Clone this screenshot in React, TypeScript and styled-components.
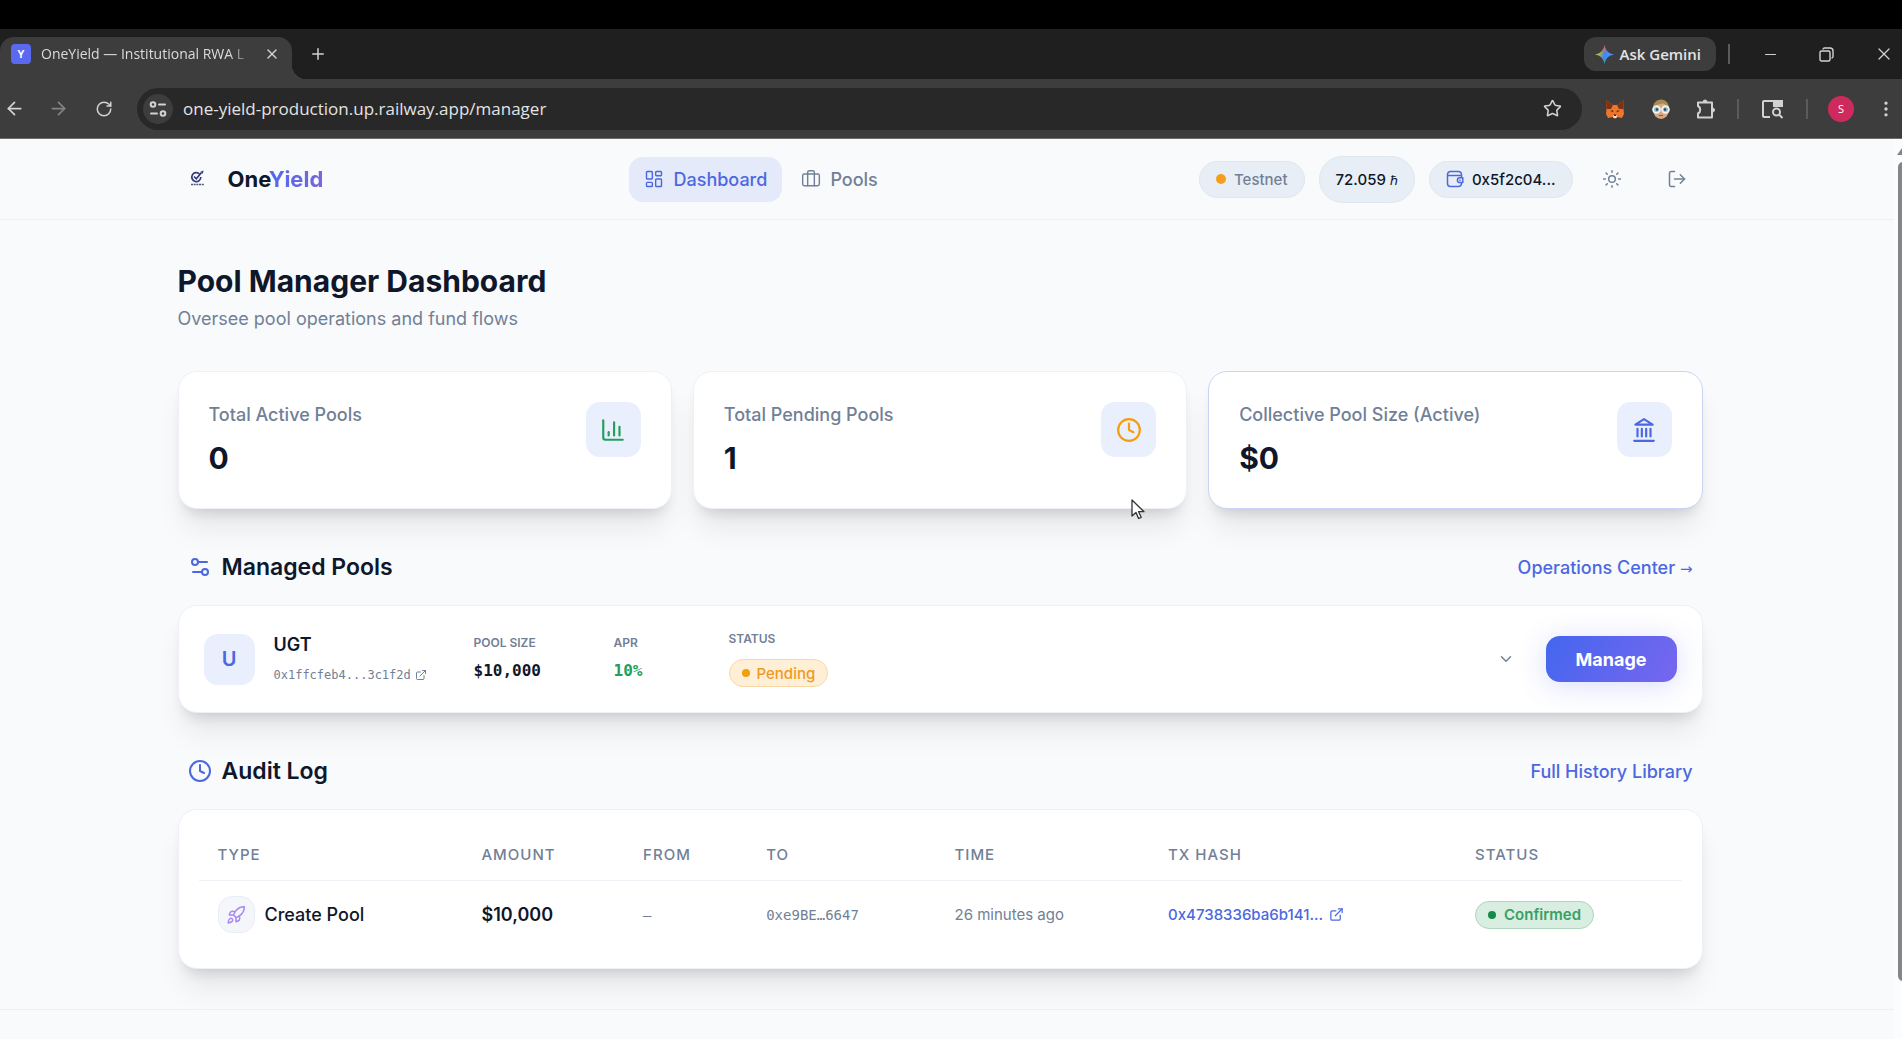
import React from "react";
import styled, { createGlobalStyle, css } from "styled-components";
import {
  ArrowLeft,
  ArrowRight,
  Briefcase,
  ChartColumn,
  ChevronDown,
  Clock,
  EllipsisVertical,
  ExternalLink,
  LayoutDashboard,
  LogOut,
  Minus,
  Plus,
  Rocket,
  RotateCw,
  Settings2,
  Star,
  Sun,
  X,
} from "lucide-react";

const sans = `Inter, "Liberation Sans", sans-serif`;
const chrome = `"Open Sans", "Noto Sans", sans-serif`;
const mono = `"DejaVu Sans Mono", "Liberation Mono", monospace`;

const ink = "#0f172a";
const muted = "#718096";
const blue = "#4c68e0";
const green = "#22a05b";
const amber = "#f59e0b";

const GlobalStyle = createGlobalStyle`
  *, *::before, *::after { box-sizing: border-box; }
  html, body { margin: 0; height: 100%; overflow: hidden; }
  #root { height: 100%; }
  body { background: #f8fafc; color: ${ink}; font-family: ${sans}; }
  button, input { font: inherit; color: inherit; }
  button { border: 0; padding: 0; background: none; cursor: pointer; }
  a { color: inherit; text-decoration: none; }
  h1, h2, h3, p, dl, dd, dt { margin: 0; }
  svg { display: block; flex: none; }
`;

/* ---------- browser frame ---------- */

const Window = styled.div`
  display: flex;
  flex-direction: column;
  height: 100vh;
  border-top: 29px solid #000;
`;

const TabStrip = styled.div`
  display: flex;
  align-items: flex-end;
  height: 50px;
  flex: none;
  background: #1f1f1f;
  color: #dcdcdc;
  font-family: ${chrome};
`;

const Tab = styled.div`
  position: relative;
  display: flex;
  align-items: center;
  gap: 10px;
  width: 292px;
  height: 42px;
  padding: 0 12px 8px 11px;
  border-radius: 14px 14px 0 0;
  background: #3c3d3c;
  &::after {
    content: "";
    position: absolute;
    left: 100%;
    bottom: 0;
    width: 14px;
    height: 14px;
    background: radial-gradient(circle at 100% 0, transparent 14px, #3c3d3c 14px);
  }
`;

const Favicon = styled.span`
  display: grid;
  place-items: center;
  width: 20px;
  height: 20px;
  flex: none;
  border-radius: 4px;
  background: #5b68f0;
  color: #fff;
  font: 700 10px ${sans};
`;

const TabTitle = styled.span`
  flex: 1;
  overflow: hidden;
  white-space: nowrap;
  font-size: 14px;
  line-height: 20px;
  mask-image: linear-gradient(90deg, #000 88%, transparent);
`;

const ChromeButton = styled.button<{ $w?: number; $dim?: boolean }>`
  display: grid;
  place-items: center;
  width: ${(p) => p.$w ?? 32}px;
  height: 34px;
  flex: none;
  color: ${(p) => (p.$dim ? "#838383" : "#d2d2d2")};
`;

const TabClose = styled(ChromeButton)`
  height: 20px;
`;

const NewTab = styled(ChromeButton)`
  margin-left: 10px;
  margin-bottom: 8px;
`;

const WindowControls = styled.div`
  display: flex;
  align-items: center;
  height: 34px;
  margin-left: auto;
  margin-bottom: 8px;
`;

const WindowClose = styled(ChromeButton)`
  margin-left: 12px;
`;

const Gemini = styled.button`
  display: flex;
  align-items: center;
  gap: 6px;
  height: 34px;
  padding: 0 15px 0 11px;
  border-radius: 12px;
  background: #3c3d3c;
  color: #e4e4e4;
  font-size: 15px;
  font-weight: 600;
`;

const Divider = styled.span<{ $gap: number }>`
  width: 2px;
  height: 20px;
  margin: 0 ${(p) => p.$gap}px;
  background: #5a5b5a;
`;

const Toolbar = styled.div`
  display: flex;
  align-items: center;
  height: 60px;
  flex: none;
  background: #3c3d3c;
  border-bottom: 1px solid #6e6e6e;
  color: #d2d2d2;
  font-family: ${chrome};
`;

const NavButtons = styled.div`
  display: flex;
  gap: 14px;
  width: 137px;
`;

const AddressBar = styled.div`
  display: flex;
  align-items: center;
  flex: 1;
  height: 42px;
  padding: 0 12px 0 6px;
  border-radius: 21px;
  background: #282828;
`;

const SiteInfo = styled.button`
  display: grid;
  place-items: center;
  width: 30px;
  height: 30px;
  border-radius: 50%;
  background: #3c3d3c;
`;

const Url = styled.input`
  flex: 1;
  min-width: 0;
  padding: 0 0 0 10px;
  border: 0;
  outline: 0;
  background: none;
  color: #e3e3e3;
  font-size: 17px;
  line-height: 24px;
`;

const Extensions = styled.div`
  display: flex;
  align-items: center;
  padding: 0 3px 0 10px;
`;

const Avatar = styled.button`
  display: grid;
  place-items: center;
  width: 26px;
  height: 26px;
  margin: 0 19px 0 10px;
  border-radius: 50%;
  background: #cf2a5d;
  color: #fff;
  font-size: 11px;
`;

/* ---------- page ---------- */

const Viewport = styled.div`
  display: flex;
  flex: 1;
  min-height: 0;
  background: #fbfcfd;
`;

const Page = styled.div`
  flex: 1;
  min-width: 0;
  overflow: hidden;
  background: #f8fafc;
`;

const Scrollbar = styled.div`
  display: flex;
  flex-direction: column;
  align-items: flex-end;
  width: 8px;
  padding: 9px 0 58px;
  overflow: hidden;
  gap: 7px;
`;

const ScrollArrow = styled.span`
  border: 5px solid transparent;
  border-top: 0;
  border-bottom: 7px solid #858585;
  margin-right: -5px;
`;

const Thumb = styled.span`
  flex: 1;
  width: 10px;
  margin-right: -6px;
  border-radius: 5px;
  background: #858585;
`;

const container = css`
  width: 100%;
  max-width: 1561px;
  margin: 0 auto;
  padding: 0 25px 0 11px;
`;

const Header = styled.header`
  border-bottom: 1px solid #eceff3;
`;

const HeaderInner = styled.div`
  ${container}
  display: flex;
  align-items: center;
  justify-content: space-between;
  height: 80px;
`;

const Brand = styled.a`
  display: flex;
  align-items: center;
  gap: 17px;
  font-size: 22px;
  font-weight: 700;
  line-height: 28px;
`;

const BrandAccent = styled.span`
  background: linear-gradient(90deg, #4f6af0, #7a66d8);
  background-clip: text;
  color: transparent;
`;

const Nav = styled.nav`
  display: flex;
  gap: 4px;
`;

const NavLink = styled.a<{ $active?: boolean }>`
  display: flex;
  align-items: center;
  gap: 9px;
  height: 45px;
  padding: 0 15px;
  border-radius: 14px;
  background: ${(p) => (p.$active ? "#e5eafa" : "transparent")};
  color: ${(p) => (p.$active ? blue : muted)};
  font-size: 18px;
  font-weight: 500;
`;

const HeaderRight = styled.div`
  display: flex;
  align-items: center;
  gap: 14px;
`;

const Pill = styled.span<{ $tall?: boolean; $muted?: boolean }>`
  display: flex;
  align-items: center;
  gap: 8px;
  height: ${(p) => (p.$tall ? 47 : 37)}px;
  padding: 0 16px;
  border: 1px solid #e0e7ef;
  border-radius: 24px;
  background: #e8eef5;
  color: ${(p) => (p.$muted ? muted : ink)};
  font-size: 15px;
  font-weight: 500;
  svg { color: ${blue}; }
`;

const Hbar = styled.span`
  font-size: 13px;
`;

const Dot = styled.i<{ $color: string; $size?: number }>`
  width: ${(p) => p.$size ?? 8}px;
  height: ${(p) => p.$size ?? 8}px;
  flex: none;
  border-radius: 50%;
  background: ${(p) => p.$color};
`;

const IconButton = styled.button`
  display: grid;
  place-items: center;
  width: 51px;
  height: 45px;
  color: ${muted};
`;

const Main = styled.main`
  ${container}
  padding-top: 42px;
  padding-bottom: 40px;
`;

const Title = styled.h1`
  font-size: 30px;
  font-weight: 700;
  line-height: 38px;
`;

const Subtitle = styled.p`
  margin-top: 5px;
  color: ${muted};
  font-size: 18px;
  line-height: 28px;
`;

const cardSurface = css`
  border: 1px solid #edf1f7;
  border-radius: 19px;
  background: #fff;
  box-shadow: 0 24px 30px -6px rgba(0, 0, 0, 0.08), 0 10px 14px -7px rgba(0, 0, 0, 0.14);
`;

const StatGrid = styled.section`
  display: grid;
  grid-template-columns: repeat(3, 1fr);
  gap: 21px;
  margin-top: 38px;
`;

const StatCard = styled.article<{ $outlined?: boolean }>`
  ${cardSurface}
  display: flex;
  justify-content: space-between;
  height: 138px;
  padding: 30px;
  ${(p) => p.$outlined && "border-color: #ccd3f4;"}
`;

const StatLabel = styled.h3`
  color: ${muted};
  font-size: 18px;
  font-weight: 500;
  line-height: 26px;
`;

const StatValue = styled.p`
  margin-top: 10px;
  font-size: 30px;
  font-weight: 700;
  line-height: 40px;
`;

const Tile = styled.span<{ $size: number; $color: string }>`
  display: grid;
  place-items: center;
  width: ${(p) => p.$size}px;
  height: ${(p) => p.$size}px;
  flex: none;
  border-radius: 14px;
  background: #e9effc;
  color: ${(p) => p.$color};
  font-size: 20px;
  font-weight: 600;
`;

const SectionHead = styled.div`
  display: flex;
  align-items: center;
  justify-content: space-between;
  height: 38px;
  margin: 39px 0 19px;
  padding: 0 10px;
`;

const SectionTitle = styled.h2`
  display: flex;
  align-items: center;
  gap: 10px;
  font-size: 23px;
  font-weight: 600;
  line-height: 30px;
  svg { color: ${blue}; }
`;

const SectionLink = styled.a`
  color: ${blue};
  font-size: 18px;
  font-weight: 500;
`;

const Arrow = styled.span`
  font: 15px "DejaVu Sans", sans-serif;
`;

const PoolCard = styled.article`
  ${cardSurface}
  display: grid;
  grid-template-columns: 51px 181px 121px 96px 1fr auto auto;
  column-gap: 19px;
  align-items: center;
  height: 108px;
  padding: 0 25px;
`;

const PoolName = styled.h3`
  font-size: 18px;
  font-weight: 600;
  line-height: 24px;
`;

const Address = styled.a`
  display: flex;
  align-items: center;
  gap: 4px;
  margin-top: 8px;
  color: ${muted};
  font: 12px/20px ${mono};
`;

const Metric = styled.dl``;

const MetricLabel = styled.dt`
  color: ${muted};
  font-size: 12px;
  font-weight: 600;
  line-height: 16px;
`;

const MetricValue = styled.dd<{ $color?: string }>`
  margin-top: 8px;
  color: ${(p) => p.$color ?? ink};
  font: 700 16px/24px ${mono};
`;

const PendingBadge = styled.dd`
  display: flex;
  align-items: center;
  gap: 7px;
  width: fit-content;
  height: 28px;
  margin-top: 12px;
  padding: 0 12px;
  border: 1px solid #f8d9a4;
  border-radius: 14px;
  background: #feefd6;
  color: #f0991e;
  font-size: 15px;
  font-weight: 500;
`;

const ConfirmedBadge = styled.span`
  display: inline-flex;
  align-items: center;
  gap: 8px;
  height: 28px;
  padding: 0 12px;
  border: 1px solid #aed5bf;
  border-radius: 14px;
  background: #d8eee1;
  color: #37a066;
  font-size: 15px;
  font-weight: 600;
`;

const Expand = styled.button`
  display: grid;
  place-items: center;
  width: 42px;
  height: 42px;
  color: ${muted};
`;

const ManageButton = styled.button`
  width: 131px;
  height: 46px;
  border-radius: 14px;
  background: linear-gradient(120deg, #4466ee, #7866f0);
  box-shadow: 0 4px 28px rgba(88, 104, 240, 0.22);
  color: #fff;
  font-size: 18px;
  font-weight: 700;
`;

const TableCard = styled.div`
  ${cardSurface}
  height: 160px;
  padding: 20px;
`;

const Table = styled.table`
  width: 100%;
  border-collapse: collapse;
  table-layout: fixed;
  text-align: left;
`;

const Th = styled.th<{ $share: number }>`
  width: ${(p) => p.$share}%;
  height: 50px;
  padding: 0 0 0 19px;
  border-bottom: 1px solid #eff2f6;
  color: ${muted};
  font-size: 15px;
  font-weight: 500;
  letter-spacing: 1px;
`;

const Td = styled.td<{ $kind?: "amount" | "mono" | "link" }>`
  height: 69px;
  padding: 0 0 0 19px;
  color: ${muted};
  font-size: 15px;
  white-space: nowrap;
  ${(p) => p.$kind === "amount" && `color: ${ink}; font-size: 18px; font-weight: 600;`}
  ${(p) => p.$kind === "mono" && `font-family: ${mono}; font-size: 14px;`}
  ${(p) => p.$kind === "link" && `color: ${blue}; font-weight: 500;`}
`;

const TypeCell = styled.span`
  display: flex;
  align-items: center;
  gap: 10px;
  color: ${ink};
  font-size: 18px;
  font-weight: 500;
`;

const TypeIcon = styled.span`
  display: grid;
  place-items: center;
  width: 37px;
  height: 37px;
  border: 1px solid #e9eef5;
  border-radius: 14px;
  background: #f4f6fc;
  color: #a78bee;
`;

const HashLink = styled.a`
  display: flex;
  align-items: center;
  gap: 6px;
`;

const Footer = styled.footer`
  height: 60px;
  border-top: 1px solid #eceff3;
`;

const Pointer = styled.svg`
  position: fixed;
  left: 1131px;
  top: 499px;
`;

/* ---------- drawings ---------- */

const TuneIcon = () => (
  <svg width="18" height="18" viewBox="0 0 18 18" fill="none" stroke="currentColor" strokeWidth="2" strokeLinecap="round">
    <circle cx="4" cy="4.5" r="2.3" />
    <path d="M10 4.5h6M2 13.5h6" />
    <circle cx="14" cy="13.5" r="2.3" />
  </svg>
);

const GeminiIcon = () => (
  <svg width="19" height="19" viewBox="0 0 20 20">
    <defs>
      <linearGradient id="gemA" x1="0" y1="0.3" x2="1" y2="0.6">
        <stop offset="0" stopColor="#f6c143" />
        <stop offset="0.35" stopColor="#8aa86b" />
        <stop offset="0.5" stopColor="#4285f4" />
        <stop offset="1" stopColor="#4aa0ff" />
      </linearGradient>
      <linearGradient id="gemB" x1="0" y1="0" x2="0" y2="1">
        <stop offset="0" stopColor="#f0534a" />
        <stop offset="0.45" stopColor="#f0534a" stopOpacity="0" />
        <stop offset="0.7" stopColor="#34b36a" stopOpacity="0" />
        <stop offset="1" stopColor="#34b36a" />
      </linearGradient>
    </defs>
    <path d="M10 0c.8 5.500 4.500 9.200 10 10-5.500.8-9.200 4.500-10 10-.8-5.500-4.500-9.200-10-10 5.500-.8 9.200-4.500 10-10z" fill="url(#gemA)" />
    <path d="M10 0c.8 5.500 4.500 9.200 10 10-5.500.8-9.200 4.500-10 10-.8-5.500-4.500-9.200-10-10 5.500-.8 9.200-4.500 10-10z" fill="url(#gemB)" />
  </svg>
);

const RestoreIcon = () => (
  <svg width="15" height="15" viewBox="0 0 15 15" fill="none" stroke="currentColor" strokeWidth="1.4">
    <rect x="1" y="4" width="10" height="10" rx="1.500" />
    <path d="M4 2.500A1.500 1.500 0 0 1 5.500 1H11a3 3 0 0 1 3 3v5.500a1.500 1.500 0 0 1-1.500 1.500" />
  </svg>
);

const FoxIcon = () => (
  <svg width="20" height="20" viewBox="0 0 20 20">
    <path d="M1 1l7 5h4l7-5-.5 9 .5 5-2 4-5-1-1 1.500H9L8 18l-5 1-2-4 .5-5z" fill="#f0762a" />
    <path d="M1 1l7 5-2 4-4.500 0zM19 1l-7 5 2 4 4.500 0z" fill="#7d3213" />
    <path d="M5 11.500l3 0 .4 2zM15 11.500l-3 0-.4 2z" fill="#3a2a2a" />
    <path d="M8 16h4l-.5 3h-3z" fill="#f3e4d6" />
    <path d="M8.500 15.500h3l-.5 1.500h-2z" fill="#2b2b2b" />
  </svg>
);

const PersonIcon = () => (
  <svg width="20" height="20" viewBox="0 0 20 20">
    <ellipse cx="10" cy="11" rx="8" ry="9" fill="#dda77f" />
    <path d="M2 9c0-5 3.500-8.500 8-8.500S18 4 18 9c-2-1-3-4-6-4.500C8 5 5 6 2 9z" fill="#a98a52" />
    <g fill="#8fc0cf" stroke="#eef4f5" strokeWidth="1.800">
      <circle cx="5.500" cy="10.500" r="3.400" />
      <circle cx="14.500" cy="10.500" r="3.400" />
    </g>
    <circle cx="6" cy="10.500" r="1.200" fill="#27424c" />
    <circle cx="14" cy="10.500" r="1.200" fill="#27424c" />
    <path d="M8 16.500h4" stroke="#9c5b45" strokeWidth="1.200" />
  </svg>
);

const PuzzleIcon = () => (
  <svg width="22" height="22" viewBox="0 0 22 22" fill="none" stroke="currentColor" strokeWidth="2" strokeLinejoin="round">
    <path d="M3 4.500h14v15H3v-4c3-1.500 3-6 0-7.500z" />
    <path d="M8 4a2 2 0 0 1 4 0zM17.500 10a2 2 0 0 1 0 4z" fill="currentColor" strokeWidth="1" />
  </svg>
);

const PanelSearchIcon = () => (
  <svg width="23" height="20" viewBox="0 0 23 20" fill="none" stroke="currentColor" strokeWidth="2">
    <path d="M9 18H3a1 1 0 0 1-1-1V3a1 1 0 0 1 1-1h17a1 1 0 0 1 1 1v5" />
    <path d="M13 2h8v5h-8z" fill="currentColor" />
    <circle cx="15.500" cy="13" r="3.500" />
    <path d="M18 15.500l3.500 3.500" />
  </svg>
);

const BrandMark = () => (
  <svg width="33" height="33" viewBox="0 0 33 33" fill="none">
    <path d="M21.500 11a4.500 4.500 0 1 0 1.300 3" stroke="#34387c" strokeWidth="1.700" />
    <path d="M16 13.500l2.300 2.300 5.200-6.300" stroke="#34387c" strokeWidth="1.700" />
    <path d="M22.500 8.800l3-1.300-.6 3.200" fill="#34387c" />
    <path d="M13 21.500h13" stroke="#50557c" strokeWidth="1.600" strokeDasharray="2 .7" />
  </svg>
);

const WalletIcon = () => (
  <svg width="18" height="18" viewBox="0 0 18 18" fill="none" stroke="currentColor" strokeWidth="1.500" strokeLinejoin="round">
    <path d="M15.500 7V4.500a3 3 0 0 0-3-3h-8a3 3 0 0 0-3 3v9a3 3 0 0 0 3 3h8a3 3 0 0 0 3-3v-.5" />
    <path d="M1.500 5.500h14" />
    <path d="M16.800 7.800h-3a2.400 2.400 0 0 0 0 4.800h3z" />
    <circle cx="14" cy="10.200" r=".4" fill="currentColor" strokeWidth="1" />
  </svg>
);

const BankIcon = ({ size = 24 }: { size?: number }) => (
  <svg width={size} height={size} viewBox="0 0 24 24" fill="none" stroke="currentColor" strokeWidth="2" strokeLinecap="round" strokeLinejoin="round">
    <path d="M3 22h18M6 18v-7M10 18v-7M14 18v-7M18 18v-7M12 2l8 5H4z" />
  </svg>
);

/* ---------- content ---------- */

const stats = [
  { label: "Total Active Pools", value: "0", color: green, Icon: ChartColumn },
  { label: "Total Pending Pools", value: "1", color: amber, Icon: Clock },
  { label: "Collective Pool Size (Active)", value: "$0", color: blue, Icon: BankIcon, outlined: true },
];

const columns = [
  { name: "Type", share: 17.8 },
  { name: "Amount", share: 10.9 },
  { name: "From", share: 8.3 },
  { name: "To", share: 12.7 },
  { name: "Time", share: 14.4 },
  { name: "Tx Hash", share: 20.7 },
  { name: "Status", share: 15.2 },
];

function BrowserFrame() {
  return (
    <>
      <TabStrip>
        <Tab>
          <Favicon>Y</Favicon>
          <TabTitle>OneYield — Institutional RWA L</TabTitle>
          <TabClose $w={16} aria-label="Close tab"><X size={16} /></TabClose>
        </Tab>
        <NewTab aria-label="New tab"><Plus size={18} /></NewTab>
        <WindowControls>
          <Gemini><GeminiIcon />Ask Gemini</Gemini>
          <Divider $gap={12} />
          <ChromeButton $w={56} aria-label="Minimize"><Minus size={17} strokeWidth={1.5} /></ChromeButton>
          <ChromeButton $w={56} aria-label="Restore"><RestoreIcon /></ChromeButton>
          <WindowClose $w={36} aria-label="Close"><X size={20} strokeWidth={1.5} /></WindowClose>
        </WindowControls>
      </TabStrip>
      <Toolbar>
        <NavButtons>
          <ChromeButton $w={28} aria-label="Back"><ArrowLeft size={21} /></ChromeButton>
          <ChromeButton aria-label="Forward" $dim><ArrowRight size={21} /></ChromeButton>
          <ChromeButton aria-label="Reload"><RotateCw size={18} /></ChromeButton>
        </NavButtons>
        <AddressBar>
          <SiteInfo aria-label="Site information"><TuneIcon /></SiteInfo>
          <Url aria-label="Address" defaultValue="one-yield-production.up.railway.app/manager" />
          <ChromeButton $w={36} aria-label="Bookmark"><Star size={19} /></ChromeButton>
        </AddressBar>
        <Extensions>
          <ChromeButton $w={46} aria-label="MetaMask"><FoxIcon /></ChromeButton>
          <ChromeButton $w={46} aria-label="Extension"><PersonIcon /></ChromeButton>
          <ChromeButton $w={44} aria-label="Extensions"><PuzzleIcon /></ChromeButton>
          <Divider $gap={9} />
          <ChromeButton $w={48} aria-label="Search panel"><PanelSearchIcon /></ChromeButton>
          <Divider $gap={10} />
          <Avatar>S</Avatar>
          <ChromeButton $w={26} aria-label="Menu"><EllipsisVertical size={20} /></ChromeButton>
        </Extensions>
      </Toolbar>
    </>
  );
}

function PageHeader() {
  return (
    <Header>
      <HeaderInner>
        <Brand href="#"><BrandMark /><span>One<BrandAccent>Yield</BrandAccent></span></Brand>
        <Nav>
          <NavLink href="#" $active><LayoutDashboard size={20} strokeWidth={1.7} />Dashboard</NavLink>
          <NavLink href="#"><Briefcase size={20} strokeWidth={1.7} />Pools</NavLink>
        </Nav>
        <HeaderRight>
          <Pill $muted><Dot $color="#f59e1b" $size={10} />Testnet</Pill>
          <Pill $tall><span>72.059 <Hbar>ℏ</Hbar></span></Pill>
          <Pill><WalletIcon />0x5f2c04...</Pill>
          <IconButton aria-label="Light theme"><Sun size={20} strokeWidth={1.8} /></IconButton>
          <IconButton aria-label="Log out"><LogOut size={20} strokeWidth={1.8} /></IconButton>
        </HeaderRight>
      </HeaderInner>
    </Header>
  );
}

export default function App() {
  return (
    <Window>
      <GlobalStyle />
      <BrowserFrame />
      <Viewport>
        <Page>
          <PageHeader />
          <Main>
            <Title>Pool Manager Dashboard</Title>
            <Subtitle>Oversee pool operations and fund flows</Subtitle>
            <StatGrid>
              {stats.map(({ label, value, color, Icon, outlined }) => (
                <StatCard key={label} $outlined={outlined}>
                  <div>
                    <StatLabel>{label}</StatLabel>
                    <StatValue>{value}</StatValue>
                  </div>
                  <Tile $size={55} $color={color}><Icon size={26} /></Tile>
                </StatCard>
              ))}
            </StatGrid>

            <SectionHead>
              <SectionTitle><Settings2 size={24} />Managed Pools</SectionTitle>
              <SectionLink href="#">Operations Center <Arrow>→</Arrow></SectionLink>
            </SectionHead>
            <PoolCard>
              <Tile $size={51} $color={blue}>U</Tile>
              <div>
                <PoolName>UGT</PoolName>
                <Address href="#">0x1ffcfeb4...3c1f2d<ExternalLink size={12} /></Address>
              </div>
              <Metric><MetricLabel>POOL SIZE</MetricLabel><MetricValue>$10,000</MetricValue></Metric>
              <Metric><MetricLabel>APR</MetricLabel><MetricValue $color={green}>10%</MetricValue></Metric>
              <Metric>
                <MetricLabel>STATUS</MetricLabel>
                <PendingBadge><Dot $color={amber} />Pending</PendingBadge>
              </Metric>
              <Expand aria-label="Show pool details"><ChevronDown size={18} /></Expand>
              <ManageButton>Manage</ManageButton>
            </PoolCard>

            <SectionHead>
              <SectionTitle><Clock size={24} />Audit Log</SectionTitle>
              <SectionLink href="#">Full History Library</SectionLink>
            </SectionHead>
            <TableCard>
              <Table>
                <thead>
                  <tr>{columns.map((c) => <Th key={c.name} $share={c.share}>{c.name.toUpperCase()}</Th>)}</tr>
                </thead>
                <tbody>
                  <tr>
                    <Td><TypeCell><TypeIcon><Rocket size={20} strokeWidth={1.8} /></TypeIcon>Create Pool</TypeCell></Td>
                    <Td $kind="amount">$10,000</Td>
                    <Td $kind="mono">–</Td>
                    <Td $kind="mono">0xe9BE…6647</Td>
                    <Td>26 minutes ago</Td>
                    <Td $kind="link"><HashLink href="#">0x4738336ba6b141...<ExternalLink size={15} /></HashLink></Td>
                    <Td><ConfirmedBadge><Dot $color="#168a4a" />Confirmed</ConfirmedBadge></Td>
                  </tr>
                </tbody>
              </Table>
            </TableCard>
          </Main>
          <Footer />
        </Page>
        <Scrollbar><ScrollArrow /><Thumb /></Scrollbar>
      </Viewport>
      <Pointer width="14" height="21" viewBox="0 0 14 21" aria-hidden="true">
        <path d="M1 1v16l4-3.500 2.600 6 2.600-1.200-2.600-5.600H13z" fill="#fff" stroke="#333" strokeWidth="1.300" strokeLinejoin="round" />
      </Pointer>
    </Window>
  );
}
